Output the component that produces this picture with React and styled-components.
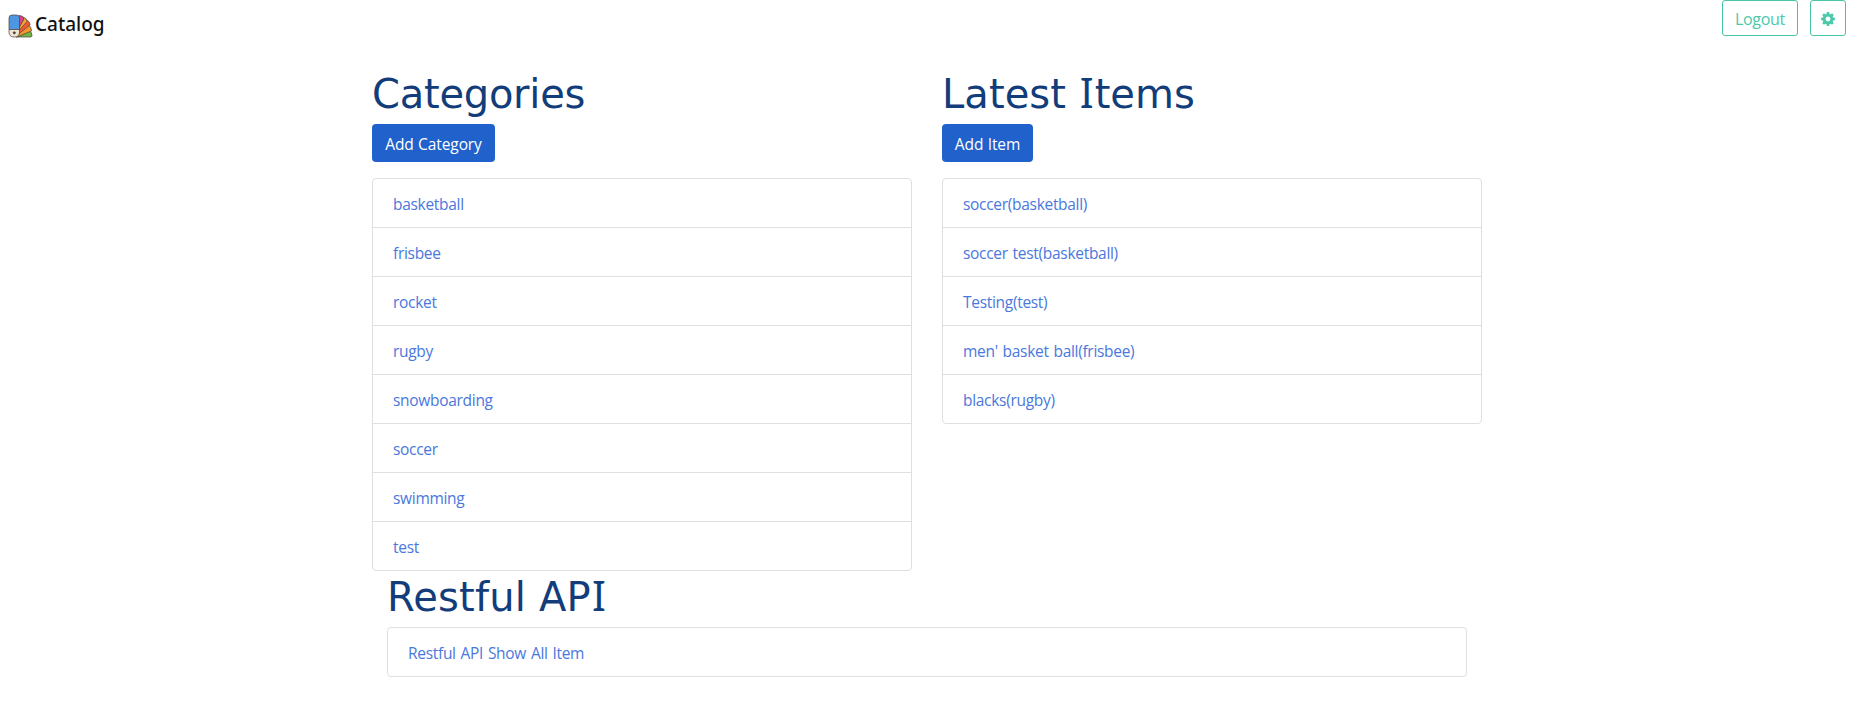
import React from "react";
import styled, { createGlobalStyle } from "styled-components";

const GlobalStyle = createGlobalStyle`
  *, *::before, *::after { box-sizing: border-box; }
  body {
    margin: 0;
    background: #fff;
    color: #212529;
    font-family: "Segoe UI", "Open Sans", "Noto Sans", sans-serif;
    font-size: 15.5px;
    line-height: 24px;
    letter-spacing: -0.3px;
    word-spacing: 1.1px;
  }
`;

const Page = styled.div`
  width: 1854px;
  min-height: 714px;
`;

const Navbar = styled.nav`
  display: flex;
  justify-content: space-between;
  align-items: flex-start;
  height: 70px;
  padding: 0 8px;
`;

const Brand = styled.a`
  display: flex;
  align-items: center;
  gap: 2px;
  padding-top: 9px;
  color: #111;
  font-family: "Segoe UI", "Noto Sans", sans-serif;
  font-size: 19px;
  font-weight: 500;
  line-height: 30px;
  letter-spacing: 0;
  text-decoration: none;
  svg { margin-top: 4px; }
`;

const Actions = styled.div`
  display: flex;
  gap: 12px;
`;

const OutlineButton = styled.button`
  display: flex;
  align-items: center;
  justify-content: center;
  width: ${(p) => p.$width}px;
  height: 36px;
  padding: 1px 0 0;
  border: 1px solid #48c4a6;
  border-radius: 3px;
  background: #fff;
  color: #4cc9a9;
  font: inherit;
  font-size: 16px;
  letter-spacing: -0.3px;
`;

const Container = styled.main`
  width: 1110px;
  margin: 0 auto;
`;

const Row = styled.div`
  display: grid;
  grid-template-columns: 1fr 1fr;
  align-items: start;
  gap: 30px;
`;

const Column = styled.section``;

const ApiSection = styled.section`
  padding: 2px 15px 0;
`;

const Heading = styled.h1`
  margin: 0 0 6px;
  color: #133d7a;
  font-family: Verdana, "DejaVu Sans", sans-serif;
  font-size: 40px;
  font-weight: 400;
  line-height: 48px;
  letter-spacing: ${(p) => p.$spacing || 0}px;
  word-spacing: 0;
  white-space: nowrap;
`;

const BarredCapital = styled.span`
  margin: 0 1px;
  font-family: Verdana, "Noto Sans", sans-serif;
  font-size: 41px;
  line-height: 1;
`;

const PrimaryButton = styled.button`
  display: block;
  width: ${(p) => p.$width}px;
  height: 38px;
  margin: 0 0 16px;
  padding: 1px 0 0;
  border: 0;
  border-radius: 4px;
  background: #2061cc;
  color: #fff;
  font: inherit;
  letter-spacing: -0.1px;
  word-spacing: 0.5px;
  white-space: nowrap;
`;

const ListGroup = styled.ul`
  margin: 0;
  padding: 0;
  border: 1px solid #dfdfdf;
  border-radius: 4px;
  list-style: none;
`;

const ListItem = styled.li`
  height: 48px;
  padding: 13px 20px 11px;
  & + & {
    height: 49px;
    border-top: 1px solid #dfdfdf;
  }
`;

const ItemLink = styled.a`
  color: #4a78dd;
  text-decoration: none;
`;

const categories = ["basketball", "frisbee", "rocket", "rugby", "snowboarding", "soccer", "swimming", "test"];
const latestItems = ["soccer(basketball)", "soccer test(basketball)", "Testing(test)", "men' basket ball(frisbee)", "blacks(rugby)"];
const apiLinks = ["Restful API Show All Item"];

function LinkList({ items }) {
  return (
    <ListGroup>
      {items.map((item) => (
        <ListItem key={item}>
          <ItemLink href="#">{item}</ItemLink>
        </ListItem>
      ))}
    </ListGroup>
  );
}

function SwatchLogo() {
  return (
    <svg width="25" height="24" viewBox="0 0 25 24" stroke="#4a4038" strokeWidth="0.7" strokeLinejoin="round">
      <path d="M8 23L21 16.5Q24 18 24 21.5Q24 23 22.5 23Z" fill="#6fb544" />
      <path d="M7 21.5L20 10.5Q23.5 12.5 23.5 17L9 23Z" fill="#f3962f" />
      <path d="M6 20L17.5 5.5Q22 7 22 11L8 22Z" fill="#ee5a35" />
      <path d="M6 18L15 3Q19 4 19 7.5L7 21Z" fill="#f5a531" />
      <path d="M5 18L11 1.5Q15.5 1.5 16 5L7 21Z" fill="#d94386" />
      <path d="M1 4Q1 1 4 1H8.5Q11.5 1 11.5 4V15.5H1Z" fill="#4c97e2" />
      <path d="M1 15.5H11.5V18Q11.5 23 6.3 23Q1 23 1 18Z" fill="#f0e4d2" />
      <circle cx="6.3" cy="18.8" r="1.1" fill="#3f3a35" />
    </svg>
  );
}

function GearIcon() {
  return (
    <svg width="14" height="14" viewBox="-7 -7 14 14" fill="currentColor">
      <circle r="3.9" fill="none" stroke="currentColor" strokeWidth="2.9" />
      {[0, 45, 90, 135, 180, 225, 270, 315].map((angle) => (
        <path key={angle} d="M-1.6 -4.5L-1.2 -6.9H1.2L1.6 -4.5Z" transform={`rotate(${angle})`} />
      ))}
    </svg>
  );
}

export default function App() {
  return (
    <Page>
      <GlobalStyle />
      <Navbar>
        <Brand href="#">
          <SwatchLogo />
          <span>Catalog</span>
        </Brand>
        <Actions>
          <OutlineButton $width={76}>Logout</OutlineButton>
          <OutlineButton $width={36} aria-label="Settings">
            <GearIcon />
          </OutlineButton>
        </Actions>
      </Navbar>
      <Container>
        <Row>
          <Column>
            <Heading $spacing={-0.25}>Categories</Heading>
            <PrimaryButton $width={123}>Add Category</PrimaryButton>
            <LinkList items={categories} />
          </Column>
          <Column>
            <Heading $spacing={0.05}>Latest <BarredCapital>I</BarredCapital>tems</Heading>
            <PrimaryButton $width={91}>Add Item</PrimaryButton>
            <LinkList items={latestItems} />
          </Column>
        </Row>
        <ApiSection>
          <Heading $spacing={0.2}>Restful AP<BarredCapital>I</BarredCapital></Heading>
          <LinkList items={apiLinks} />
        </ApiSection>
      </Container>
    </Page>
  );
}
